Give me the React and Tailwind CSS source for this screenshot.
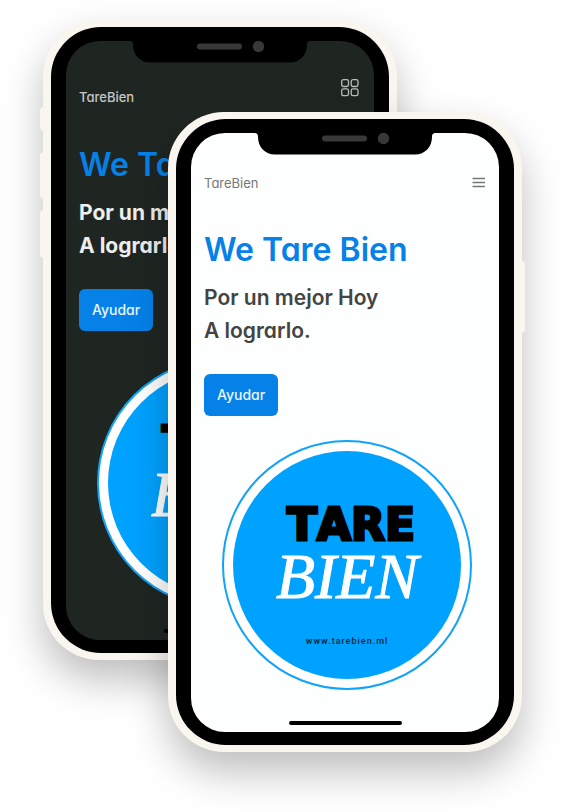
import React from "react";

function Notch() {
  return (
    <svg
      className="mx-auto block h-[22px] w-[182px] shrink-0"
      viewBox="0 0 182 22"
      aria-hidden="true"
    >
      <path
        d="M0 0H182C179 0 178 1 178 4C178 14 171 21.500 161 21.500H21C11 21.500 4 14 4 4C4 1 3 0 0 0Z"
        fill="#000"
      />
      <rect x="68" y="2.500" width="45" height="6" rx="3" fill="#383838" />
      <circle cx="129.500" cy="5.500" r="5.700" fill="#383838" />
    </svg>
  );
}

function MenuIcon() {
  return (
    <svg className="h-3 w-3.5" viewBox="0 0 14 12" aria-hidden="true">
      <path d="M0.500 1.500H13M0.500 5.500H13M0.500 9.500H13" stroke="#777777" strokeWidth="1.500" />
    </svg>
  );
}

function GridIcon() {
  return (
    <svg
      className="size-[18px]"
      viewBox="0 0 18 18"
      fill="none"
      stroke="#bcbcbc"
      strokeWidth="1.300"
      aria-hidden="true"
    >
      <rect x="0.700" y="0.700" width="6.800" height="6.800" rx="1.800" />
      <rect x="10.200" y="0.700" width="6.800" height="6.800" rx="1.800" />
      <rect x="0.700" y="9.900" width="6.800" height="6.800" rx="1.800" />
      <rect x="10.200" y="9.900" width="6.800" height="6.800" rx="1.800" />
    </svg>
  );
}

function Logo() {
  return (
    <div className="ml-[18px] flex size-[250px] shrink-0 items-center justify-center rounded-full border-2 border-[#11a2fb] bg-white">
      <div className="flex size-[228px] flex-col items-center rounded-full bg-[#00a2ff] pt-[54px]">
        <span className="ml-2 font-['DejaVu_Sans',sans-serif] text-[44px] font-bold leading-10 text-black [-webkit-text-stroke:3px_#000] [font-kerning:none]">
          TARE
        </span>
        <span className="font-['Liberation_Serif',serif] text-[64px] italic leading-[64px] text-white [-webkit-text-stroke:1px_#fff]">
          BIEN
        </span>
        <span className="mt-6 font-[Roboto,sans-serif] text-[9px] font-medium leading-4 tracking-[1px] text-[#04243a]">
          www.tarebien.ml
        </span>
      </div>
    </div>
  );
}

function Phone({ dark, className, children }) {
  return (
    <section className={`relative w-[354px] rounded-[56px] bg-[#f9f5ef] px-2 py-[7px] shadow-[0_20px_40px_rgba(0,0,0,0.26)] ${className}`}>
      {children}
      <div className="rounded-[50px] bg-black px-[15px] pb-[13px] pt-3.5">
        <div
          className={`flex h-[599px] flex-col overflow-hidden rounded-[34px] pb-[7px] ${
            dark ? "bg-[#1f2622] text-[#eeeeee]" : "bg-[#fdfffe] text-[#444444]"
          }`}
        >
          <Notch />
          <div className="flex flex-col items-start px-[13px]">
            <header
              className={`flex w-full justify-between ${
                dark ? "mt-4 h-7 items-start pr-0.5" : "mt-[18px] h-5 items-center"
              }`}
            >
              <span
                className={`self-end text-[13px] leading-5 ${
                  dark ? "font-medium text-[#c4c7c5]" : "text-[#777777]"
                }`}
              >
                TareBien
              </span>
              <button type="button" aria-label="Menú">
                {dark ? <GridIcon /> : <MenuIcon />}
              </button>
            </header>
            <h1
              className={`whitespace-nowrap text-[32px] font-semibold leading-10 text-[#0581e8] ${
                dark ? "mt-[38px]" : "mt-[37px]"
              }`}
            >
              We Tare Bien
            </h1>
            <p
              className={`mt-[11px] whitespace-nowrap text-[21px] leading-[33px] ${
                dark ? "font-bold" : "font-semibold"
              }`}
            >
              Por un mejor Hoy
              <br />A lograrlo.
            </p>
            <button
              type="button"
              className="mt-[27px] rounded-md bg-[#0581e8] px-[13px] py-[11px] text-sm font-medium leading-5 text-[#eaf5ff]"
            >
              Ayudar
            </button>
            <div className={dark ? "mt-[27px]" : "mt-6"}>
              <Logo />
            </div>
          </div>
          <div className="mx-auto mt-auto h-1 w-[113px] shrink-0 rounded-full bg-black" />
        </div>
      </div>
    </section>
  );
}

export default function App() {
  return (
    <main className="min-h-screen bg-white px-[43px] pb-[60px] pt-5 font-[Inter,sans-serif] [font-feature-settings:'cv11']">
      <div className="mx-auto grid w-fit">
        <Phone dark className="col-start-1 row-start-1 self-start">
          <i className="absolute -left-[3px] top-[87px] h-6 w-1 rounded-l-sm bg-[#f9f5ef]" />
          <i className="absolute -left-[3px] top-[132px] h-[47px] w-1 rounded-l-sm bg-[#f9f5ef]" />
          <i className="absolute -left-[3px] top-[190px] h-12 w-1 rounded-l-sm bg-[#f9f5ef]" />
        </Phone>
        <Phone className="col-start-1 row-start-1 ml-[125px] mt-[92px]">
          <i className="absolute -right-[3px] top-[149px] h-[72px] w-1 rounded-r-sm bg-[#f9f5ef]" />
        </Phone>
      </div>
    </main>
  );
}
